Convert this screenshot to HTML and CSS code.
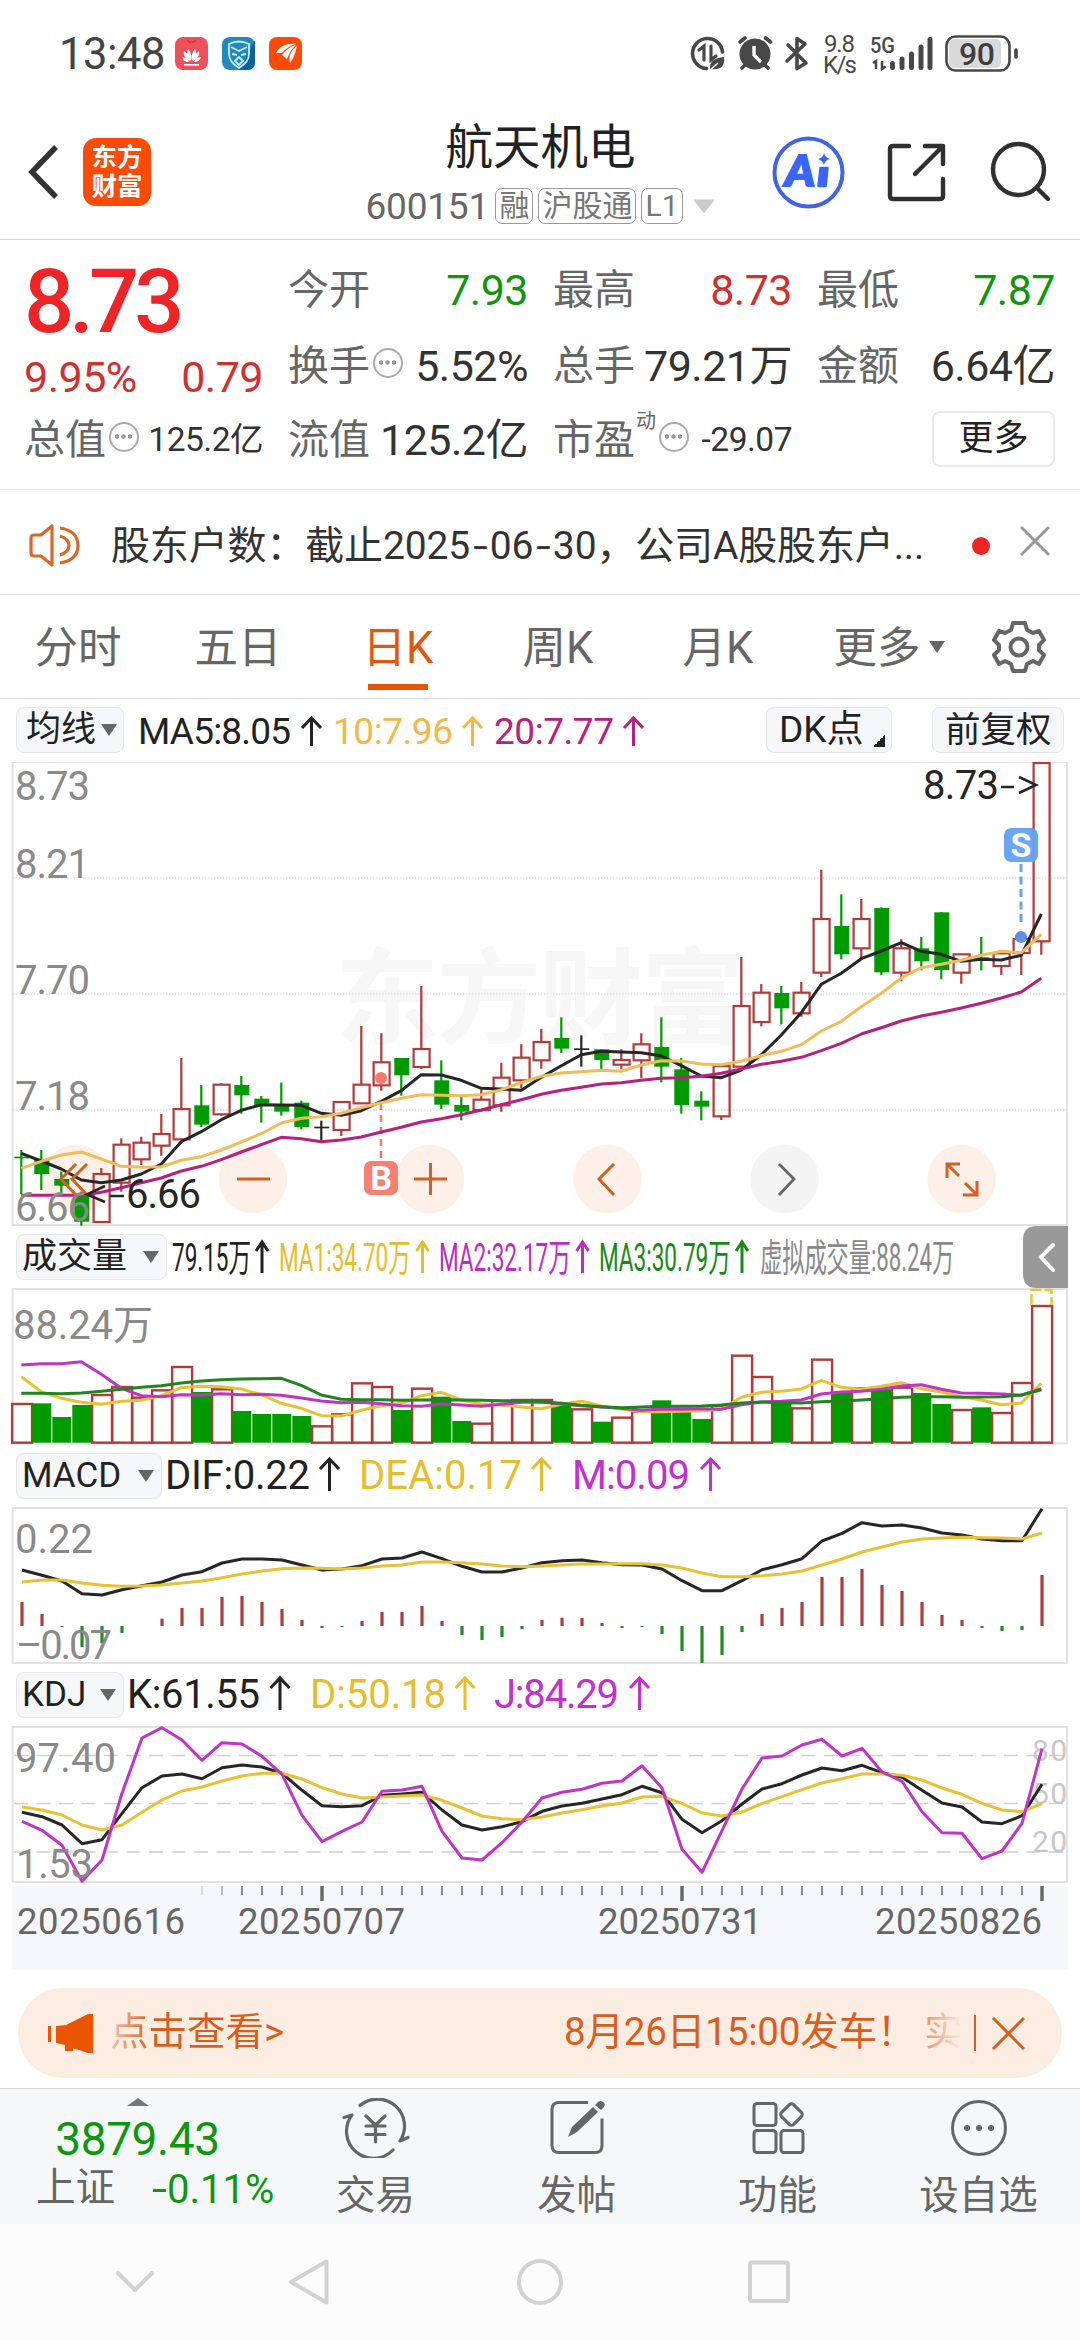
FILE: index.html
```html
<!DOCTYPE html>
<html lang="zh-CN">
<head>
<meta charset="utf-8">
<title>航天机电 600151</title>
<link rel="stylesheet" href="styles.css">
</head>
<body>
<div class="status">
  <span class="clock">13:48</span>
  <svg class="apps" width="130" height="36" viewBox="174 36 130 36">
    <rect x="175" y="37" width="33" height="33" rx="8" fill="#f0505a"/>
    <g fill="#fff"><path d="M191 61c-3-4-5-8-3-12 3 3 4 7 3 12zM192 61c3-4 5-8 3-12-3 3-4 7-3 12zM190 61c-4-2-7-5-6-10 3 2 6 6 6 10zM193 61c4-2 7-5 6-10-3 2-6 6-6 10zM189 62c-4 0-6-2-7-5 3 0 6 2 7 5zM194 62c4 0 6-2 7-5-3 0-6 2-7 5z"/><rect x="184" y="64" width="15" height="1.6"/></g>
    <path d="M187 40q4.500 5 9 0" fill="none" stroke="#c8343f" stroke-width="1.500"/>
    <rect x="222" y="37" width="33" height="33" rx="8" fill="#2189be"/><path d="M240 70l15-30v22q0 8-8 8z" fill="#0b6399"/>
    <g fill="none" stroke="#c9eefa" stroke-width="1.800"><path d="M229 44q10-5 20 0v10q0 8-10 14-10-6-10-14z"/><path d="M231 47l8 4 8-4M232 54l5 1M246 54l-5 1M235 61l4-4 4 4-4 4z"/></g>
    <rect x="269" y="37" width="33" height="33" rx="8" fill="#fd4a07"/>
    <g fill="#fff"><path d="M276 53c4-7 11-10 20-9-5 1-11 5-14 9z"/><path d="M282 55c4-5 9-9 14-10-5 5-7 9-9 14z"/><path d="M290 63c-2-6 1-13 7-17-2 7-3 12-7 17z"/></g>
  </svg>
  <svg class="system" width="334" height="56" viewBox="688 26 334 56">
    <g fill="none" stroke="#484848" stroke-width="3.600" stroke-linecap="round">
      <path d="M722.500 52a15 15 0 1 0-16 16.500"/>
      <path d="M699 50l5-4v14M711 46v14l5-4" stroke-width="3.200"/>
      <path d="M740 42l5-4M770.500 42l-5-4M742 68l4-4M768 68l-4-4"/>
      <path d="M788 45l18 18-9 5.500V38.500l8 5.500-18 17" stroke-linejoin="round"/>
    </g>
    <path d="M710 69q-1-11 14-12 2 14-14 12z" fill="#484848"/><path d="M709 71l9-8" stroke="#fff" stroke-width="1.300"/>
    <circle cx="755" cy="54" r="15.500" fill="#484848"/><path d="M754 46v9l7 7" fill="none" stroke="#fff" stroke-width="3.400"/>
    <g fill="#484848" font-size="24"><text x="824" y="52" textLength="31">9.8</text><text x="823" y="73" textLength="34">K/s</text><text x="870" y="53" font-size="22" font-weight="500" textLength="25" lengthAdjust="spacingAndGlyphs">5G</text></g>
    <g stroke="#484848" stroke-width="5" stroke-linecap="round"><path d="M892.500 63.500v4M902 59v8.500M911.500 54v13.500M921 47v20.500M930 39.500v28"/></g>
    <path d="M873 63l3-2v8M882 61v8l3.500-2.500" fill="none" stroke="#484848" stroke-width="2.500"/>
    <rect x="949" y="39" width="52" height="29" rx="5" fill="#dadada"/><rect x="946.500" y="36.500" width="63" height="34" rx="9" fill="none" stroke="#484848" stroke-width="2.600"/>
    <path d="M1016 50v7" stroke="#484848" stroke-width="3.600" stroke-linecap="round"/>
    <text x="959" y="64.500" font-weight="500" font-size="32" textLength="36" fill="#3e3e3e">90</text>
  </svg>
</div>

<header class="topbar">
  <svg class="back" width="36" height="62" viewBox="0 0 36 62"><path d="M30 6L6 31l24 25" fill="none" stroke="#333" stroke-width="5.500"/></svg>
  <div class="brand"><span>东方</span><span>财富</span></div>
  <div class="stock">
    <div class="stock-name">航天机电</div>
    <div class="stock-code"><span class="code">600151</span><span class="tag">融</span><span class="tag">沪股通</span><span class="tag">L1</span>
      <svg class="more-arrow" width="22" height="15" viewBox="0 0 22 15"><path d="M1 1h20L11 14z" fill="#ccc" stroke="#ccc" stroke-linejoin="round"/></svg></div>
  </div>
  <svg class="actions" width="280" height="76" viewBox="772 135 280 76">
    <circle cx="808.500" cy="172.500" r="34" fill="none" stroke="#4064e8" stroke-width="4"/>
    <text class="ai" x="785" y="186" font-size="42" textLength="30" lengthAdjust="spacingAndGlyphs">A</text>
    <path d="M820.500 168h7l-2 18h-7z" fill="#3a66ff" stroke="#3a66ff" stroke-width="2.500" stroke-linejoin="round"/><path d="M824 153q1 4 6 6-5 1-6 6-1-4-6-6 5-1 6-6z" fill="#3a66ff"/>
    <g fill="none" stroke="#303030" stroke-width="4.400" stroke-linecap="round" stroke-linejoin="round">
      <path d="M909 146h-16q-3 0-3 3v47q0 3 3 3h47q3 0 3-3v-17M925 146h18v18M942 147l-27 27"/>
      <circle cx="1018.500" cy="169.500" r="25.500"/><path d="M1037 188l11 11"/>
    </g>
  </svg>
</header>

<section class="quote">
  <div class="col">
    <div class="price">8.73</div>
    <div class="change"><span>9.95%</span><span>0.79</span></div>
    <div class="item"><span class="k">总值</span><i class="dots"></i><span class="v sm">125.2亿</span></div>
  </div>
  <div class="col">
    <div class="item"><span class="k">今开</span><span class="v dn">7.93</span></div>
    <div class="item"><span class="k">换手</span><i class="dots"></i><span class="v">5.52%</span></div>
    <div class="item"><span class="k">流值</span><span class="v">125.2亿</span></div>
  </div>
  <div class="col">
    <div class="item"><span class="k">最高</span><span class="v up">8.73</span></div>
    <div class="item"><span class="k">总手</span><span class="v">79.21万</span></div>
    <div class="item"><span class="k">市盈</span><sup class="dyn">动</sup><i class="dots"></i><span class="v sm">-29.07</span></div>
  </div>
  <div class="col">
    <div class="item"><span class="k">最低</span><span class="v dn">7.87</span></div>
    <div class="item"><span class="k">金额</span><span class="v">6.64亿</span></div>
    <div class="item"><span class="more">更多</span></div>
  </div>
</section>

<section class="notice">
  <svg width="54" height="44" viewBox="28 525 54 44" fill="none" stroke="#d9682a" stroke-width="3.200" stroke-linejoin="round"><path d="M52 527v39l-11-9h-7q-3 0-3-3v-15q0-3 3-3h7zM60 529q18 3 18 17.500T60 564M60 537q9 3 9 9.500T60 556"/></svg>
  <span class="notice-text">股东户数：截止2025<u>-</u>06<u>-</u>30，公司A股股东户...</span>
  <i class="red-dot"></i>
  <svg class="close" width="32" height="32" viewBox="0 0 32 32"><path d="M2 2l28 28M30 2L2 30" stroke="#999" stroke-width="3"/></svg>
</section>

<nav class="tabs">
  <span>分时</span><span>五日</span><span class="on">日K</span><span>周K</span><span>月K</span><span class="tab-more">更多<i></i></span>
  <svg width="54" height="54" viewBox="-27 -27 54 54" fill="none" stroke="#666" stroke-width="4" stroke-linejoin="round"><path d="M-6-24H6L8-17 14-14 20-16 25-7 20-2V3L25 8 20 17 14 14 8 17 6 24H-6L-8 17-14 14-20 17-25 8-20 3V-2L-25-7-20-16-14-14-8-17z"/><circle r="8.500"/></svg>
</nav>

<section class="charts">
  <div class="legend price-legend">
    <span class="pick w108">均线<i></i></span>
    <svg class="readout" width="642" height="62" viewBox="124 699 642 62" font-size="37">
      <g fill="#222" stroke="#222"><text x="138" y="743" textLength="153">MA5:8.05</text><path class="arr" d="M311.500 745v-28M302 727l9.500-10 9.500 10"/></g>
      <g fill="#efb950" stroke="#efb950"><text x="333" y="743" textLength="120">10:7.96</text><path class="arr" d="M472.500 745v-28M463 727l9.500-10 9.500 10"/></g>
      <g fill="#b8207e" stroke="#b8207e"><text x="494" y="743" textLength="120">20:7.77</text><path class="arr" d="M633.500 745v-28M624 727l9.500-10 9.500 10"/></g>
    </svg>
    <span class="pick dk">DK点<b></b></span>
    <span class="pick fq">前复权</span>
  </div>
  <svg id="price" width="1080" height="464" viewBox="0 762 1080 464"></svg>

  <div class="legend">
    <span class="pick w151">成交量<i></i></span>
    <svg class="readout" width="850" height="62" viewBox="167 1226 850 62" font-size="38">
      <g fill="#222" stroke="#222"><text transform="translate(172 1271) scale(.594 1)" textLength="133">79.15万</text><path class="arr" d="M262 1273v-32M256 1251l6-9 6 9"/></g>
      <g fill="#e6bd2c" stroke="#e6bd2c"><text transform="translate(279 1271) scale(.594 1)" textLength="222">MA1:34.70万</text><path class="arr" d="M422.500 1273v-32M416.500 1251l6-9 6 9"/></g>
      <g fill="#bd2dc6" stroke="#bd2dc6"><text transform="translate(439 1271) scale(.594 1)" textLength="222">MA2:32.17万</text><path class="arr" d="M582.500 1273v-32M576.500 1251l6-9 6 9"/></g>
      <g fill="#178a17" stroke="#178a17"><text transform="translate(599 1271) scale(.594 1)" textLength="222">MA3:30.79万</text><path class="arr" d="M742 1273v-32M736 1251l6-9 6 9"/></g>
      <text transform="translate(760 1271) scale(.587 1)" textLength="331" fill="#888">虚拟成交量:88.24万</text>
    </svg>
    <svg class="drawer" width="45" height="62" viewBox="0 0 45 62"><path d="M45 0H14Q0 0 0 14v34q0 14 14 14h31z" fill="#999"/><path d="M30 19L18 31l12 13" fill="none" stroke="#fff" stroke-width="4" stroke-linecap="round"/></svg>
  </div>
  <svg id="volume" width="1080" height="157" viewBox="0 1288 1080 157"></svg>

  <div class="legend">
    <span class="pick w146">MACD<i></i></span>
    <svg class="readout" width="850" height="62" viewBox="162 1445 850 62" font-size="40">
      <g fill="#222" stroke="#222"><text x="165" y="1489" textLength="145">DIF:0.22</text><path class="arr" d="M329.500 1491v-32M320 1469l9.500-10 9.500 10"/></g>
      <g fill="#e6bd2c" stroke="#e6bd2c"><text x="359" y="1489" textLength="163">DEA:0.17</text><path class="arr" d="M541.500 1491v-32M532 1469l9.500-10 9.500 10"/></g>
      <g fill="#c32fd0" stroke="#c32fd0"><text x="572" y="1489" textLength="118">M:0.09</text><path class="arr" d="M710.500 1491v-32M701 1469l9.500-10 9.500 10"/></g>
    </svg>
  </div>
  <svg id="macd" width="1080" height="157" viewBox="0 1507 1080 157"></svg>

  <div class="legend">
    <span class="pick w108">KDJ<i></i></span>
    <svg class="readout" width="850" height="62" viewBox="124 1664 850 62" font-size="40">
      <g fill="#222" stroke="#222"><text x="127" y="1708" textLength="133">K:61.55</text><path class="arr" d="M280 1710v-32M270.500 1688l9.500-10 9.500 10"/></g>
      <g fill="#e6bd2c" stroke="#e6bd2c"><text x="310" y="1708" textLength="136">D:50.18</text><path class="arr" d="M465 1710v-32M455.500 1688l9.500-10 9.500 10"/></g>
      <g fill="#c32fd0" stroke="#c32fd0"><text x="494" y="1708" textLength="125">J:84.29</text><path class="arr" d="M639.500 1710v-32M630 1688l9.500-10 9.500 10"/></g>
    </svg>
  </div>
  <svg id="kdj" width="1080" height="157" viewBox="0 1726 1080 157"></svg>
  <svg id="axis" class="axis" width="1056" height="84" viewBox="12 1886 1056 84"></svg>
</section>

<div class="banner">
  <svg width="48" height="42" viewBox="46 2011 48 42" fill="#ea5504"><path d="M48 2025h3v16h-3zM56 2025l10-1 22-11h5v39h-5l-15-5v3h-8v-6l-9-2z"/></svg>
  <span class="b-left">点击查看&gt;</span>
  <span class="b-right">8月26日15:00发车！</span>
  <span class="b-fade">实</span>
  <i class="bar"></i>
  <svg width="33" height="33" viewBox="0 0 33 33"><path d="M1 1l31 31M32 1L1 32" stroke="#dd5c1c" stroke-width="3"/></svg>
</div>

<footer class="toolbar">
  <div class="index">
    <svg width="22" height="8" viewBox="0 0 22 8"><path d="M0 8h22L11 0z" fill="#777"/></svg>
    <div class="idx-val">3879.43</div>
    <div class="idx-row"><span>上证</span><b><u>-</u>0.11%</b></div>
  </div>
  <div class="tool"><svg width="68" height="60" viewBox="342 2098 68 60" fill="none" stroke="#666" stroke-width="3.200" stroke-linecap="round" stroke-linejoin="round"><path d="M360 2105.500A27 27 0 0 1 400 2141l8-3.500M344 2117.500l8-2.500A27 27 0 0 0 393 2150M366 2116l9.500 9 9.500-9M366 2126h19M366 2134.500h19M375.500 2125v17"/></svg>交易</div>
  <div class="tool"><svg width="68" height="60" viewBox="543 2098 68 60"><path d="M588 2102.500h-29q-7 0-7 7v36q0 7 7 7h36q7 0 7-7v-27" fill="none" stroke="#666" stroke-width="3"/><path d="M568 2137l4-10 21-20 5 5-21 20zM595 2105l3-3q2-2 5 0t1 5l-3 3z" fill="#666"/></svg>发帖</div>
  <div class="tool"><svg width="68" height="60" viewBox="744 2098 68 60" fill="none" stroke="#666" stroke-width="3"><rect x="754" y="2103.500" width="22" height="22" rx="3"/><rect x="754" y="2130.500" width="22" height="22" rx="3"/><rect x="781" y="2130.500" width="22" height="22" rx="3"/><rect x="783" y="2106" width="17" height="17" rx="3" transform="rotate(45 791.500 2114.500)"/></svg>功能</div>
  <div class="tool"><svg width="68" height="60" viewBox="945 2098 68 60"><circle cx="979" cy="2128" r="26.500" fill="none" stroke="#666" stroke-width="3"/><g fill="#666"><circle cx="967" cy="2128" r="3"/><circle cx="979" cy="2128" r="3"/><circle cx="991" cy="2128" r="3"/></g></svg>设自选</div>
</footer>

<svg class="sysnav" width="1080" height="116" viewBox="0 2224 1080 116" fill="none" stroke="#d2d2d2" stroke-width="4" stroke-linejoin="round" stroke-linecap="round"><path d="M118 2273l17 17 17-17M326.500 2261.500v41L291 2282z"/><circle cx="540" cy="2282" r="21"/><rect x="750" y="2262.500" width="38" height="38.500" rx="2"/></svg>
<script src="app.js"></script>
</body>
</html>
```
FILE: styles.css
```css
* { box-sizing: border-box; }
body { margin: 0; width: 1080px; height: 2340px; overflow: hidden; background: #fff; color: #222; font-family: Roboto, "Noto Sans CJK SC", sans-serif; display: flex; flex-direction: column; }
svg { display: block; flex: none; }
svg text { font-family: Roboto, "Noto Sans CJK SC", sans-serif; stroke: none; }
svg text.ai { font-family: Lato, sans-serif; font-weight: 900; font-style: italic; fill: #3a66ff; stroke: #3a66ff; stroke-width: 2; }
i, b { font-style: normal; font-weight: 400; }
u { display: inline-block; text-decoration: none; transform: scaleX(1.35); margin: 0 2px; }

.status { height: 108px; display: flex; align-items: flex-start; flex: none; }
.clock { margin: 30px 0 0 59px; width: 115px; font-size: 43.5px; line-height: 50px; color: #444; letter-spacing: -.5px; }
.apps { margin-top: 36px; }
.system { margin: 26px 0 0 384px; }

.topbar { height: 132px; display: flex; border-bottom: 1px solid #d6d6d6; flex: none; }
.back { margin: 33px 0 0 26px; }
.brand { margin: 30px 0 0 21px; width: 68px; height: 68px; border-radius: 13px; background: #fd4a05; color: #fff; display: flex; flex-direction: column; align-items: center; justify-content: center; font-size: 25.5px; line-height: 29px; font-weight: 700; }
.stock { width: 621px; margin-top: 10px; display: flex; flex-direction: column; align-items: center; }
.stock-name { font-size: 47.5px; line-height: 60px; margin-left: 158px; color: #222; }
.stock-code { display: flex; align-items: center; margin: 9px 0 0 157px; height: 38px; color: #666; font-size: 37px; }
.code { width: 126px; letter-spacing: -.2px; }
.tag { height: 36px; border: 1.5px solid #999; border-radius: 7px; padding: 0 3px; font-size: 30px; line-height: 33px; margin: 0 5px 0 4px; color: #777; }
.tag + .tag { margin-left: 0; }
.more-arrow { margin-left: 5px; }
.actions { margin-top: 27px; }

.quote { height: 250px; padding: 12px 25px 0 24px; display: grid; grid-template-columns: 239px 240px 239px 238px; column-gap: 25px; border-bottom: 1px solid #ebebeb; flex: none; }
.price { height: 100px; line-height: 100px; font-size: 88.5px; font-weight: 500; color: #ee2526; letter-spacing: -5px; }
.change { height: 50px; margin-bottom: 2px; display: flex; justify-content: space-between; align-items: center; font-size: 43px; color: #d23030; letter-spacing: -.5px; }
.item { height: 76px; display: flex; align-items: center; white-space: nowrap; line-height: 50px; }
.item:last-child { height: 72px; }
.k { font-size: 41px; color: #666; }
.v { margin-left: auto; font-size: 43px; color: #333; letter-spacing: -.5px; }
.v.sm { font-size: 33.5px; }
.v.up { color: #d23030; }
.v.dn { color: #0e970e; }
.dots { width: 30px; height: 30px; margin: -6px 0 0 3px; border: 2.5px solid #aaa; border-radius: 50%; background: radial-gradient(circle at 6px 12.5px, #999 1.8px, transparent 2.5px), radial-gradient(circle at 12.5px 12.5px, #999 1.8px, transparent 2.5px), radial-gradient(circle at 19px 12.5px, #999 1.8px, transparent 2.5px); }
.dyn { font-size: 20px; line-height: 20px; color: #666; margin: -38px 0 0 1px; }
.more { margin-left: auto; width: 123px; height: 56px; margin-top: -2px; border: 2px solid #e9eaec; border-radius: 8px; text-align: center; font-size: 35px; line-height: 51px; color: #222; }

.notice { height: 105px; padding: 8px 0 0 28px; display: flex; align-items: center; border-bottom: 1px solid #d6d6d6; flex: none; }
.notice-text { margin-left: 29px; width: 861px; font-size: 39px; line-height: 50px; color: #333; white-space: nowrap; letter-spacing: -.15px; }
.notice-text u { margin: 0 4.5px; }
.red-dot { width: 18px; height: 18px; border-radius: 50%; background: #ef2525; }
.close { margin: -10px 0 0 29px; }

.tabs { height: 104px; display: flex; align-items: center; border-bottom: 1px solid #d6d6d6; color: #666; font-size: 43.5px; flex: none; }
.tabs span { width: 160px; height: 103px; line-height: 107px; text-align: center; position: relative; left: -2px; }
.tabs span.on { color: #e2570f; background: linear-gradient(#e5540b, #e5540b) 50% 89px / 60px 6px no-repeat; }
.tabs span.tab-more { width: 172px; margin-left: 5px; }
.tab-more i, .pick i { display: inline-block; border: 8px solid transparent; border-bottom: 0; border-top: 12px solid #666; margin-left: 8px; vertical-align: middle; }
.tab-more i { margin-top: -9px; }
.tabs svg { margin-left: 15px; }

.charts { flex: none; }
.legend { height: 62px; padding-left: 16px; display: flex; align-items: center; }
.price-legend { height: 63px; }
.pick { height: 46px; border: 1.5px solid #e4e6e9; border-radius: 8px; background: #f6f7fa; padding-left: 5px; font-size: 35px; line-height: 42px; white-space: nowrap; color: #222; display: flex; align-items: center; flex: none; }
.pick i { margin: 0 7px 0 auto; }
.w108 { width: 108px; }
.w151 { width: 151px; }
.w146 { width: 146px; }
.price-legend .pick { margin-top: -1px; }
.price-legend .w108 { padding-left: 9px; }
.price-legend .w108 i { margin-right: 6px; }
.pick.dk { width: 126px; padding-left: 12px; font-size: 37px; }
.pick.dk b { width: 12px; height: 12px; margin: 22px 0 0 9px; background: linear-gradient(135deg, transparent 50%, #222 50%); }
.pick.fq { width: 132px; margin-left: 40px; padding-left: 12px; font-size: 35.5px; }
.drawer { margin-left: 6px; }
.arr { fill: none; stroke-width: 3; }
.axis { margin: 3px 0 0 12px; background: #f6f7fa; }

.frame { fill: none; stroke: #e2e2e2; stroke-width: 2; }
.dot-grid { stroke: #dedede; stroke-width: 1.5; stroke-dasharray: 1.5 1.5; }
.dash-grid { stroke: #d0d0d0; stroke-width: 1.5; stroke-dasharray: 14 8.5; }
.scale { fill: #8a8a8a; font-size: 40px; }
.band { fill: #c8c8c8; font-size: 30px; }
.date { fill: #666; font-size: 36.5px; }
.watermark { fill: #f7f7f7; font-size: 104px; font-weight: 700; }
.line { fill: none; stroke-width: 3; stroke-linejoin: round; }

.banner { height: 90px; margin: 18px 18px 10px; padding-left: 28px; border-radius: 45px; background: #fcede3; color: #dd5c1c; display: flex; align-items: center; font-size: 38.5px; line-height: 50px; white-space: nowrap; flex: none; }
.b-left, .b-right, .b-fade { margin-top: -2px; }
.b-left { margin-left: 16px; width: 454px; background: linear-gradient(90deg, #f2c3a8, #dd5c1c 42px); -webkit-background-clip: text; background-clip: text; color: transparent; }
.b-right { width: 360px; letter-spacing: -.15px; }
.b-fade { width: 39px; background: linear-gradient(90deg, #e59467, #fbe3d5 35px); -webkit-background-clip: text; background-clip: text; color: transparent; }
.bar { width: 2px; height: 36px; background: #dd5c1c; margin: 0 16px 0 11px; }

.toolbar { height: 136px; border-top: 1.500px solid #d3d7dc; background: #f6f7f9; display: grid; grid-template-columns: 275px repeat(4, 201px); color: #666; font-size: 39.5px; flex: none; }
.index { display: flex; flex-direction: column; align-items: center; padding-top: 9px; }
.idx-val { font-size: 46px; line-height: 54px; margin-top: 6px; color: #0e970e; letter-spacing: -.4px; }
.idx-row { display: flex; gap: 37px; line-height: 44px; padding-left: 36px; width: 275px; white-space: nowrap; }
.idx-row b { color: #0e970e; font-size: 40px; margin-top: 2px; }
.tool { display: flex; flex-direction: column; align-items: center; padding-top: 9px; line-height: 48px; }
.tool svg { margin-bottom: 14px; }
.sysnav { background: #fcfcfc; }
```
FILE: app.js
```js
const NS = 'http://www.w3.org/2000/svg';
const RED = '#b23a3a', GREEN = '#009b00', INK = '#262626';
const X0 = 21.3, STEP = 20;
const xAt = i => X0 + i * STEP;

function add(parent, tag, attrs, text) {
  const el = document.createElementNS(NS, tag);
  for (const k in attrs) el.setAttribute(k, attrs[k]);
  if (text) el.textContent = text;
  parent.appendChild(el);
  return el;
}
// Series values are stored in thirds of a pixel below each panel's origin.
const yOf = origin => v => origin + v / 3;
function line(svg, values, y, color, dx = 0) {
  add(svg, 'polyline', { class: 'line', stroke: color, points: values.map((v, i) => (xAt(i) + dx).toFixed(1) + ',' + y(v).toFixed(1)).join(' ') });
}
function frame(svg, top, bottom) {
  add(svg, 'rect', { class: 'frame', x: 12.7, y: top, width: 1054.3, height: bottom - top });
}
function label(svg, cls, x, y, len, text) {
  add(svg, 'text', { class: cls, x, y, textLength: len }, text);
}

// high, body top, body bottom, low, kind
const candles = [
[1200,1220,1225,1332,'g'],[1200,1230,1272,1320,'g'],[1265,1287,1307,1327,'g'],[1325,1335,1415,1427,'g'],[1254,1272,1416,1416,'r'],[1165,1184,1298,1325,'r'],[1160,1178,1228,1245,'r'],[1092,1152,1187,1217,'r'],[924,1077,1168,1168,'r'],[1005,1066,1124,1131,'g'],
[1000,1004,1093,1097,'r'],[978,1005,1036,1091,'g'],[1038,1046,1068,1118,'g'],[998,1068,1085,1097,'g'],[1052,1058,1131,1138,'g'],[1112,1130,1135,1172,'k'],[1055,1056,1140,1158,'r'],[828,1004,1060,1060,'r'],[850,937,1006,1022,'r'],[924,924,976,1037,'g'],
[708,897,951,957,'r'],[931,991,1064,1077,'g'],[1041,1065,1085,1111,'g'],[1018,1049,1080,1085,'r'],[938,983,1066,1085,'r'],[883,923,991,1015,'r'],[836,876,931,956,'r'],[802,864,896,909,'g'],[856,895,900,950,'k'],[898,898,930,958,'g'],
[898,930,944,958,'r'],[850,883,931,985,'r'],[802,891,950,997,'g'],[924,958,1065,1091,'g'],[1024,1052,1070,1111,'g'],[945,948,1099,1110,'r'],[621,768,950,950,'r'],[702,728,816,829,'r'],[708,729,775,823,'g'],[696,728,790,800,'r'],
[359,507,668,681,'r'],[433,528,613,628,'g'],[447,507,595,630,'r'],[472,474,667,675,'g'],[568,595,668,694,'r'],[561,595,634,661,'g'],[486,487,660,688,'g'],[612,613,668,701,'r'],[561,622,629,661,'g'],[603,610,648,675,'r'],
[560,567,609,675,'r'],[36,39,574,614,'r']];
const ma5 = [1210,1233,1257,1290,1298,1290,1272,1242,1175,1145,1109,1081,1064,1065,1066,1090,1096,1082,1054,1022,974,975,991,1015,1017,1021,982,947,914,904,906,908,918,947,978,983,960,914,855,788,703,670,626,603,578,604,613,634,628,630,616,492];
const ma10 = [1255,1234,1215,1206,1227,1249,1252,1250,1231,1220,1200,1176,1151,1119,1105,1100,1090,1073,1058,1045,1034,1036,1037,1034,1019,998,979,969,965,961,964,945,932,933,942,944,934,917,904,884,843,814,770,730,684,653,643,631,616,604,608,553];
const ma20 = [1336,1336,1336,1336,1327,1313,1298,1284,1263,1249,1229,1206,1184,1162,1166,1175,1170,1161,1146,1132,1116,1106,1094,1080,1064,1049,1033,1021,1012,1002,998,991,985,983,979,970,957,943,934,922,902,880,852,833,813,798,787,774,760,744,726,685];

const price = document.getElementById('price');
const py = yOf(750);
label(price, 'watermark', 335, 1036, 410, '东方财富');
[878, 994, 1110].forEach(y => add(price, 'line', { class: 'dot-grid', x1: 13, x2: 1067, y1: y, y2: y }));
frame(price, 762, 1225);
[[76, 1], [253, 1], [430, 1], [607.5, 1], [784.5, 0], [961.5, 1]].forEach(([cx, on]) =>
  add(price, 'circle', { cx, cy: 1179, r: 34.3, fill: on ? '#fdeee6' : '#f2f2f2', 'fill-opacity': .88 }));
candles.forEach(([h, t, b, l, kind], i) => {
  const x = xAt(i), color = kind === 'r' ? RED : kind === 'g' ? GREEN : INK;
  if (kind === 'r') {
    add(price, 'path', { d: `M${x} ${py(h)}V${py(t)}M${x} ${py(b)}V${py(l)}`, stroke: color, 'stroke-width': 2.2 });
    add(price, 'rect', { x: x - 7.7, y: py(t), width: 16, height: Math.max(1, py(b) - py(t)), fill: 'none', stroke: color, 'stroke-width': 2.2 });
  } else {
    add(price, 'path', { d: `M${x} ${py(h)}V${py(l)}`, stroke: color, 'stroke-width': 2.2 });
    add(price, 'rect', { x: x - 7, y: py(t), width: 15, height: py(b) - py(t), fill: color });
  }
});
add(price, 'path', { d: 'M381 1103V1160', stroke: '#e08078', 'stroke-width': 2.6, 'stroke-dasharray': '7 5' });
add(price, 'path', { d: 'M1021 864V922', stroke: '#6ea3e8', 'stroke-width': 3, 'stroke-dasharray': '8 4.500' });
add(price, 'circle', { cx: 381, cy: 1078, r: 6, fill: '#fb7767' });
add(price, 'circle', { cx: 1021, cy: 937, r: 6, fill: '#5d90e6' });
line(price, ma5, py, INK);
line(price, ma10, py, '#efbd5a');
line(price, ma20, py, '#b8207e');
[['8.73', 800], ['8.21', 878], ['7.70', 994], ['7.18', 1110], ['6.66', 1221]].forEach(([t, y]) => label(price, 'scale', 15, y, 75, t));
[[364, 1161, '#f97a6c', 'B'], [1004, 828, '#65a1f6', 'S']].forEach(([x, y, fill, t]) => {
  add(price, 'rect', { x, y, width: 34, height: 34, rx: 7, fill, 'fill-opacity': .96 });
  add(price, 'text', { x: x + 17, y: y + 29, 'text-anchor': 'middle', fill: '#fff', 'font-size': 34, 'font-weight': 700 }, t);
});
add(price, 'path', { d: 'M76 1164L61 1179L76 1195M87 1164L72 1179L87 1195M237 1179H270M414 1179H447M430.500 1163V1195M614 1164L599 1179L614 1195M947 1178V1164H960M948 1165L959 1176M977 1181V1195H963M976 1194L965 1183', fill: 'none', stroke: '#d35f22', 'stroke-width': 3 });
add(price, 'path', { d: 'M779 1164L794 1179L779 1195', fill: 'none', stroke: '#666', 'stroke-width': 2.8 });
add(price, 'path', { d: 'M105 1186L87 1194.500L105 1202M110 1196H124', fill: 'none', stroke: INK, 'stroke-width': 2.6 });
add(price, 'text', { x: 126, y: 1207.5, fill: INK, 'font-size': 40, textLength: 75 }, '6.66');
add(price, 'text', { x: 923, y: 798.5, fill: INK, 'font-size': 40, textLength: 76 }, '8.73');
add(price, 'path', { d: 'M1001 787H1014M1019 777L1036 785L1019 793', fill: 'none', stroke: INK, 'stroke-width': 2.6 });

const volumes = [549,550,591,555,522,498,530,508,438,516,505,573,582,582,588,616,580,487,498,570,503,530,603,608,540,537,537,549,565,605,590,572,541,563,597,555,404,468,548,562,416,519,502,508,500,519,552,567,562,576,486,255];
const volGreen = new Set([1,2,3,9,11,12,13,14,19,21,22,27,29,32,33,34,38,41,43,45,46,48]);
const v1 = [470,515,535,547,553,544,541,527,503,499,500,507,524,550,565,587,588,571,557,550,527,517,540,552,556,561,566,553,544,558,567,575,575,574,573,568,532,517,514,507,481,502,508,499,488,506,516,530,540,554,549,490];
const v2 = [435,431,431,425,463,505,527,530,524,525,521,524,523,526,534,543,548,547,551,557,559,552,555,559,553,547,546,552,557,561,565,571,567,568,566,568,554,546,544,540,522,516,514,508,498,494,508,519,520,522,526,506];
const v3 = [520,520,521,519,514,508,502,497,489,483,479,477,476,475,496,525,538,539,539,541,540,539,540,541,542,543,545,550,556,560,563,561,559,559,558,555,549,546,548,549,545,543,540,536,532,530,530,532,531,530,525,509];
const volume = document.getElementById('volume');
const vy = yOf(1220), vb = vy(668);
frame(volume, 1289, 1443.5);
label(volume, 'scale', 13, 1339, 140, '88.24万');
volumes.forEach((v, i) => {
  const x = xAt(i) - 9;
  if (volGreen.has(i)) add(volume, 'rect', { x, y: vy(v), width: 19, height: vb - vy(v), fill: GREEN });
  else add(volume, 'rect', { x: x - .2, y: vy(v) + 1, width: 20, height: vb - vy(v) - 1, fill: 'none', stroke: RED, 'stroke-width': 2.4 });
});
add(volume, 'path', { d: 'M1031.500 1305V1290H1051.500V1305', fill: 'none', stroke: '#e9c434', 'stroke-width': 2.4, 'stroke-dasharray': '11 3' });
line(volume, v1, vy, '#e8c235');
line(volume, v2, vy, '#bd35c2');
line(volume, v3, vy, '#208520');

const hist = [1146,1182,1221,1281,1270,1239,1218,1196,1164,1164,1131,1128,1146,1167,1200,1224,1221,1203,1176,1176,1158,1203,1245,1260,1251,1227,1200,1193,1194,1209,1224,1221,1242,1293,1329,1305,1236,1182,1164,1146,1071,1071,1047,1095,1113,1146,1185,1200,1224,1233,1230,1065];
const dif = [1050,1066,1083,1121,1125,1109,1097,1086,1065,1055,1029,1017,1017,1020,1035,1050,1047,1037,1017,1014,996,1016,1039,1056,1056,1044,1028,1022,1020,1028,1034,1035,1047,1082,1112,1112,1082,1049,1034,1016,963,940,908,918,915,924,939,945,957,962,962,866];
const dea = [1086,1080,1080,1089,1096,1099,1098,1095,1089,1083,1073,1062,1053,1046,1044,1045,1047,1044,1038,1035,1026,1026,1028,1032,1038,1040,1038,1035,1032,1032,1031,1031,1035,1044,1059,1070,1070,1067,1062,1053,1035,1017,996,981,966,957,954,952,953,954,957,939];
const macd = document.getElementById('macd');
frame(macd, 1508, 1663);
hist.forEach((v, i) => {
  if (v !== 1218) add(macd, 'line', { x1: xAt(i) + .7, x2: xAt(i) + .7, y1: vy(1218), y2: vy(v), stroke: v < 1218 ? RED : '#1f8d1f', 'stroke-width': 3.2 });
});
label(macd, 'scale', 15, 1553, 78, '0.22');
label(macd, 'scale', 16, 1659, 96, '–0.07');
line(macd, dif, vy, INK, .7);
line(macd, dea, vy, '#e8c235', .7);

const k = [457,470,495,551,539,460,383,348,342,356,323,315,321,340,391,437,440,437,406,402,397,450,495,510,500,485,454,438,430,417,404,379,398,478,518,482,432,387,371,345,324,332,316,338,352,391,429,441,486,491,467,373];
const d = [441,450,465,495,510,495,457,420,393,381,363,348,340,340,357,383,402,414,411,408,405,421,444,468,476,479,471,459,449,438,429,411,409,430,459,468,456,431,410,389,369,356,342,342,346,360,384,403,430,450,455,431];
const j = [484,511,556,664,600,400,234,203,240,301,248,252,289,343,466,545,514,486,394,390,379,514,594,600,548,486,414,397,388,370,363,317,384,568,637,512,387,294,288,255,238,288,265,336,364,455,518,520,596,573,490,266];
const kdj = document.getElementById('kdj');
const ky = yOf(1660);
frame(kdj, 1727, 1882);
[1755.5, 1803.5, 1852].forEach(y => add(kdj, 'line', { class: 'dash-grid', x1: 14, x2: 1066, y1: y, y2: y }));
[['80', 1761], ['50', 1804], ['20', 1852]].forEach(([t, y]) => label(kdj, 'band', 1032, y, 35, t));
line(kdj, k, ky, INK, .7);
line(kdj, d, ky, '#e8c235', .7);
line(kdj, j, ky, '#c035c6', .7);
label(kdj, 'scale', 15, 1771.5, 101, '97.40');
label(kdj, 'scale', 16, 1878, 77, '1.53');

const axis = document.getElementById('axis');
for (let i = 9; i < candles.length; i++) {
  const major = i === 15 || i === 33 || i === 51;
  add(axis, 'line', { x1: xAt(i) + .7, x2: xAt(i) + .7, y1: 1886, y2: major ? 1901 : 1895, stroke: major ? '#666' : i === 9 ? '#ddd' : i === 10 ? '#bbb' : '#8a8a8a', 'stroke-width': major ? 3.4 : 2 });
}
[[17, '20250616', 168], [238, '20250707', 167], [598, '20250731', 164], [875, '20250826', 167]].forEach(([x, t, len]) => label(axis, 'date', x, 1934, len, t));
```
